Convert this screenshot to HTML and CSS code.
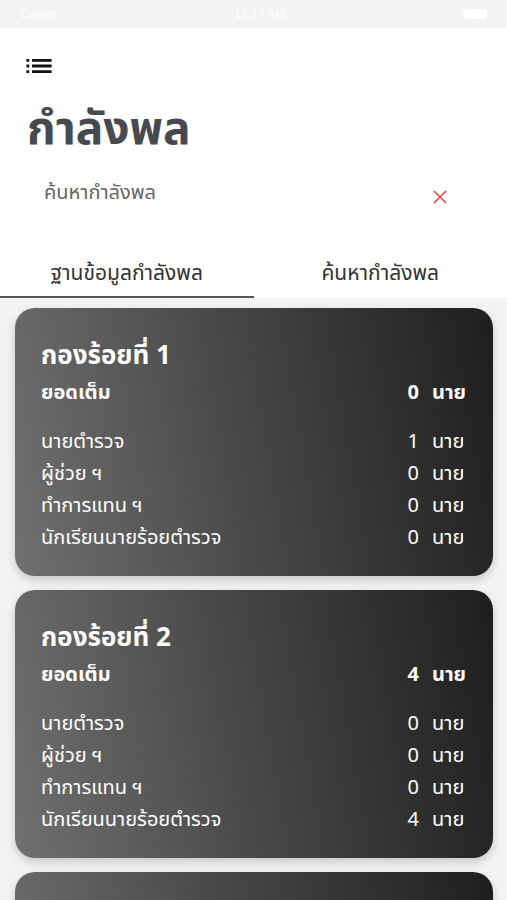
FILE: index.html
```html
<!DOCTYPE html>
<html lang="th">
<head>
    <meta charset="UTF-8">
    <meta name="viewport" content="width=device-width, initial-scale=1.0">
    <title>กำลังพล</title>
    <link rel="stylesheet" href="styles.css">
</head>
<body>
    <!-- Status bar -->
    <div class="status-bar">
        <span class="carrier">Carrier</span>
        <span class="clock">12:17 AM</span>
        <span class="battery"></span>
    </div>

    <header class="page-header">
        <button class="menu-btn" aria-label="menu">
            <svg width="26" height="14" viewBox="3 7 18 10">
                <path d="M3 13h2v-2H3v2zm0 4h2v-2H3v2zm0-8h2V7H3v2zm4 4h14v-2H7v2zm0 4h14v-2H7v2zM7 7v2h14V7H7z" fill="#111"/>
            </svg>
        </button>
        <h1 class="page-title">กำลังพล</h1>
        <div class="search-row">
            <span class="search-text">ค้นหากำลังพล</span>
            <svg class="clear-icon" width="14" height="14" viewBox="0 0 14 14">
                <path d="M1 1L13 13M13 1L1 13" stroke="#e8484a" stroke-width="1.6" fill="none"/>
            </svg>
        </div>
    </header>

    <!-- Tabs -->
    <div class="tabs">
        <div class="tab active">ฐานข้อมูลกำลังพล</div>
        <div class="tab">ค้นหากำลังพล</div>
    </div>

    <!-- Company cards -->
    <main class="card-list">
        <section class="company-card">
            <h2 class="card-title">กองร้อยที่ 1</h2>
            <div class="row total"><span class="label">ยอดเต็ม</span><span class="num">0</span><span class="unit">นาย</span></div>
            <div class="rows">
                <div class="row"><span class="label">นายตำรวจ</span><span class="num">1</span><span class="unit">นาย</span></div>
                <div class="row"><span class="label">ผู้ช่วย ฯ</span><span class="num">0</span><span class="unit">นาย</span></div>
                <div class="row"><span class="label">ทำการแทน ฯ</span><span class="num">0</span><span class="unit">นาย</span></div>
                <div class="row"><span class="label">นักเรียนนายร้อยตำรวจ</span><span class="num">0</span><span class="unit">นาย</span></div>
            </div>
        </section>

        <section class="company-card">
            <h2 class="card-title">กองร้อยที่ 2</h2>
            <div class="row total"><span class="label">ยอดเต็ม</span><span class="num">4</span><span class="unit">นาย</span></div>
            <div class="rows">
                <div class="row"><span class="label">นายตำรวจ</span><span class="num">0</span><span class="unit">นาย</span></div>
                <div class="row"><span class="label">ผู้ช่วย ฯ</span><span class="num">0</span><span class="unit">นาย</span></div>
                <div class="row"><span class="label">ทำการแทน ฯ</span><span class="num">0</span><span class="unit">นาย</span></div>
                <div class="row"><span class="label">นักเรียนนายร้อยตำรวจ</span><span class="num">4</span><span class="unit">นาย</span></div>
            </div>
        </section>

        <!-- next card, only its top edge is in view -->
        <section class="company-card"></section>
    </main>
</body>
</html>
```

FILE: styles.css
```css
body {
    margin: 0;
    padding: 0;
    font-family: "Noto Sans Thai", "Noto Sans", "Loma", "Garuda", sans-serif;
    background-color: #f3f3f3;
    height: 900px;
    overflow: hidden;
}

.status-bar {
    height: 28px;
    background-color: #f3f3f3;
    display: flex;
    align-items: center;
    justify-content: space-between;
    padding: 0 20px;
    color: #fff;
    font-size: 12px;
    font-family: "Liberation Sans", sans-serif;
}

.battery {
    width: 24px;
    height: 10px;
    background-color: #fff;
    border-radius: 3px;
}

.page-header {
    background-color: #fff;
    padding: 31px 0 0 0;
}

.menu-btn {
    display: block;
    margin-left: 26px;
    padding: 0;
    border: none;
    background: none;
    height: 14px;
}

.menu-btn svg {
    display: block;
}

.page-title {
    margin: 27px 0 0 27px;
    font-size: 46px;
    font-weight: 700;
    color: #464a4e;
    line-height: 60px;
}

.search-row {
    display: flex;
    align-items: center;
    justify-content: space-between;
    padding: 0 60px 0 44px;
    height: 50px;
    margin-top: 8px;
}

.search-text {
    font-size: 20px;
    color: #666;
}

.clear-icon {
    margin-top: 8px;
}

.tabs {
    display: flex;
    background-color: #fff;
    padding-top: 33px;
}

.tab {
    flex: 1;
    text-align: center;
    font-size: 21px;
    color: #333;
    height: 45px;
    line-height: 45px;
    border-bottom: 2px solid transparent;
}

.tab.active {
    border-bottom-color: #555;
}

.card-list {
    display: flex;
    flex-direction: column;
    gap: 14px;
    padding: 10px 14px 0 15px;
}

.company-card {
    background: linear-gradient(80deg, #707070 0%, #4a4a4a 45%, #1e1e1e 100%);
    border-radius: 20px;
    box-shadow: 0 4px 10px rgba(0, 0, 0, 0.18);
    color: #fff;
    padding: 28px 28px 30px 26px;
    height: 268px;
    box-sizing: border-box;
    flex-shrink: 0;
}

.card-title {
    margin: 0;
    font-size: 26px;
    font-weight: 700;
    line-height: 40px;
}

.row {
    display: flex;
    align-items: center;
    font-size: 20px;
    height: 32px;
}

.row .label {
    flex: 1;
}

.row .num {
    width: 20px;
    text-align: right;
}

.row .unit {
    margin-left: 13px;
    width: 33px;
}

.row.total {
    font-weight: 700;
    font-size: 20px;
    height: 34px;
}

.rows {
    margin-top: 16px;
}
```
